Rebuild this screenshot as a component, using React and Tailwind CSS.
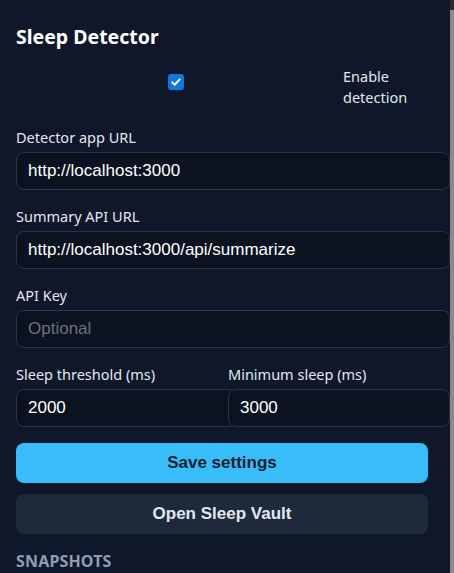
const Field = ({ label, value, placeholder, className = "" }) => {
  return (
    <div className={`flex flex-col ${className}`}>
      <label className="text-[14.5px] leading-5 text-slate-200 mb-[5px]">{label}</label>
      <div className="h-[38px] w-[calc(100%+22px)] flex items-center rounded-lg border border-[#2a3547] bg-[#0b1220] pl-[11px] font-['Liberation_Sans',Arial,sans-serif] text-[17px]">
        {value ? (
          <span className="text-white">{value}</span>
        ) : (
          <span className="text-[#6b7280]">{placeholder}</span>
        )}
      </div>
    </div>
  )
}

const App = () => {
  return (
    <div className="flex h-[573px] w-[454px] overflow-hidden bg-[#0f172a] font-['Noto_Sans',sans-serif] text-slate-200">
      <div className="w-[450px] shrink-0 pl-4 pr-[22px]">
        <h1 className="mt-[23px] text-[19.5px] leading-7 font-bold text-white">Sleep Detector</h1>

        <div className="mt-[15px] flex items-start gap-2">
          <div className="flex-1 flex justify-center pt-2">
            <div className="w-4 h-4 rounded-[3px] bg-[#1277dc] flex items-center justify-center">
              <svg viewBox="0 0 16 16" className="w-3 h-3" fill="none" stroke="white" strokeWidth="2.6" strokeLinecap="round" strokeLinejoin="round">
                <path d="M3 8.5l3.2 3.2L13 4.5" />
              </svg>
            </div>
          </div>
          <span className="w-[85px] text-[14.5px] leading-[21px] text-slate-200">Enable detection</span>
        </div>

        <Field className="mt-[19px]" label="Detector app URL" value="http://localhost:3000" />
        <Field className="mt-4" label="Summary API URL" value="http://localhost:3000/api/summarize" />
        <Field className="mt-4" label="API Key" placeholder="Optional" />

        <div className="mt-4 grid grid-cols-2 gap-x-3">
          <Field label="Sleep threshold (ms)" value="2000" />
          <Field label="Minimum sleep (ms)" value="3000" />
        </div>

        <div className="mt-4 flex flex-col gap-[11px] font-['Liberation_Sans',Arial,sans-serif] text-[17px] font-bold">
          <button className="h-10 w-full rounded-lg bg-[#38bdf8] text-[#0f1f33]">Save settings</button>
          <button className="h-10 w-full rounded-lg bg-[#1e293b] text-slate-200">Open Sleep Vault</button>
        </div>

        <h2 className="mt-[17px] text-[16px] leading-5 font-bold tracking-[0.01em] text-[#8f9db2]">SNAPSHOTS</h2>
      </div>
      <div className="w-1 shrink-0 bg-[#2b2b2b] pt-[10px]">
        <div className="h-full w-full bg-[#8a8a8a]" />
      </div>
    </div>
  )
}

export default App
